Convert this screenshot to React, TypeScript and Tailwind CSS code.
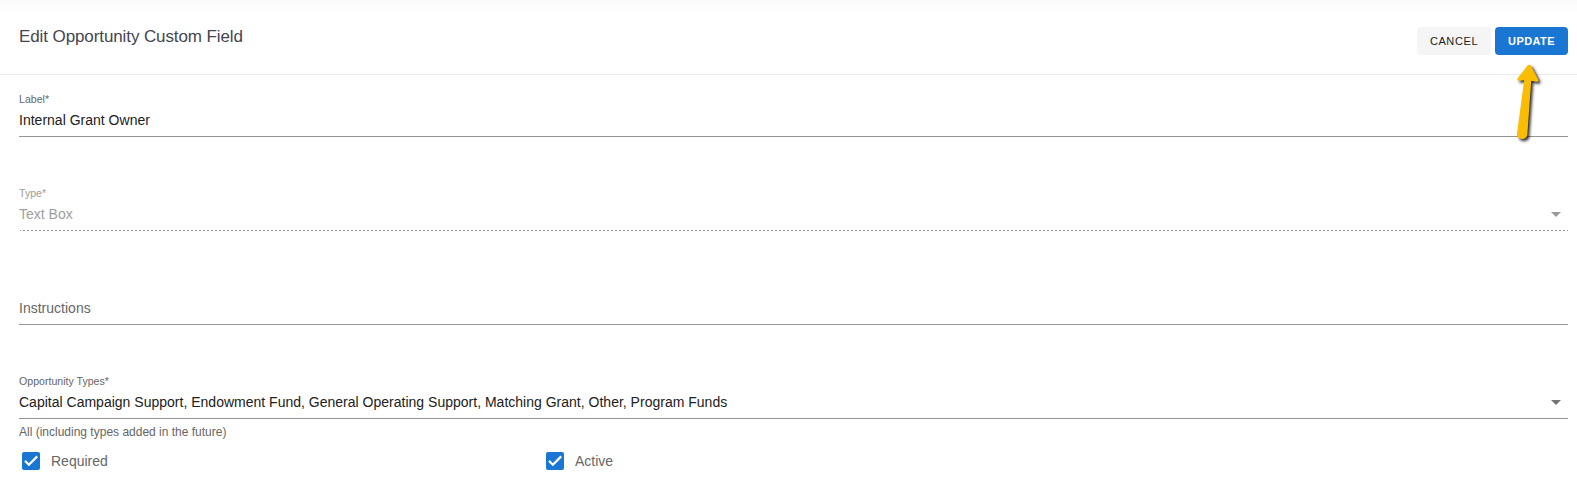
const fields = [
  { label: "Label*", value: "Internal Grant Owner", select: false, disabled: false },
  { label: "Type*", value: "Text Box", select: true, disabled: true },
  { label: "Instructions", value: "", select: false, disabled: false },
  {
    label: "Opportunity Types*",
    value: "Capital Campaign Support, Endowment Fund, General Operating Support, Matching Grant, Other, Program Funds",
    select: true,
    disabled: false,
  },
];

function Field({ label, value, select, disabled }: (typeof fields)[number]) {
  return (
    <div className="mb-[50px]">
      <div className={`h-4 text-[10.6px] leading-[13px] ${disabled ? "text-[#9e9e9e]" : "text-[#666]"}`}>
        {value ? label : ""}
      </div>
      <div className="flex h-[27px] items-start justify-between pr-[7px]">
        <span
          className={`text-sm leading-[22px] tracking-[0.008px] ${disabled ? "text-[#9e9e9e]" : value ? "text-[#212121]" : "text-[#666]"}`}
        >
          {value || label}
        </span>
        {select && (
          <svg className={`mt-[9px] ${disabled ? "text-[#999]" : "text-[#757575]"}`} width="10" height="5" viewBox="0 0 10 5">
            <path d="M0 0h10L5 5z" fill="currentColor" />
          </svg>
        )}
      </div>
      {disabled ? (
        <div className="ml-px h-px bg-[repeating-linear-gradient(90deg,#949494_0_1px,transparent_1px_3px,#949494_3px_4px)]" />
      ) : (
        <div className="h-px bg-[#949494]" />
      )}
    </div>
  );
}

function CheckItem({ label }: { label: string }) {
  return (
    <div className="flex w-[524px] items-center pl-[3px]">
      <span className="flex size-[18px] items-center justify-center rounded-[2px] bg-[#1976d2] text-white">
        <svg width="18" height="18" viewBox="0 0 18 18">
          <path d="M3 8.9L6.9 12.7L15.2 4.4" fill="none" stroke="currentColor" strokeWidth="2.2" />
        </svg>
      </span>
      <span className="ml-[11px] text-sm leading-[18px] text-[#666]">{label}</span>
    </div>
  );
}

export default function App() {
  return (
    <div className="relative h-[492px] w-[1577px] overflow-hidden bg-white font-['Liberation_Sans',Arial,sans-serif]">
      <header className="flex h-[75px] items-start justify-between border-b border-[#ebebeb] bg-linear-to-b from-[#fbfbfb] to-white to-[17px] pr-[9px] pl-[19px]">
        <h1 className="mt-[25px] text-[17px] leading-6 tracking-[-0.1px] text-[#454550]">Edit Opportunity Custom Field</h1>
        <div className="mt-[27px] flex gap-1">
          <button className="h-7 w-[74px] rounded bg-[#f5f5f5] text-[11px] tracking-[0.6px] text-[#212121]">CANCEL</button>
          <button className="h-7 w-[73px] rounded bg-[#1976d2] text-[11px] font-bold tracking-[0.4px] text-white">UPDATE</button>
        </div>
      </header>

      <main className="pt-[18px] pr-[9px] pl-[19px]">
        {fields.map((field) => (
          <Field key={field.label} {...field} />
        ))}
        <p className="-mt-[45px] text-xs leading-4 text-[#666]">All (including types added in the future)</p>
        <div className="mt-3 flex">
          <CheckItem label="Required" />
          <CheckItem label="Active" />
        </div>
      </main>

      {/* Pointer to the update button */}
      <svg className="absolute top-[60px] left-[1509px]" width="40" height="90" viewBox="0 0 40 90">
        <g className="[filter:drop-shadow(2px_2px_1.5px_rgba(0,0,0,0.85))]">
          <path
            d="M18.6 5.5Q20 4 21.8 5.5L29.2 19.5Q30 22 27.5 21.8L22.2 20.8L18.3 75Q17.5 79 13 79Q7.8 79 8 74L15.200 20.2L10 20.8Q7.500 20.5 8.800 18Z"
            fill="#fbbc04"
          />
        </g>
      </svg>
    </div>
  );
}
